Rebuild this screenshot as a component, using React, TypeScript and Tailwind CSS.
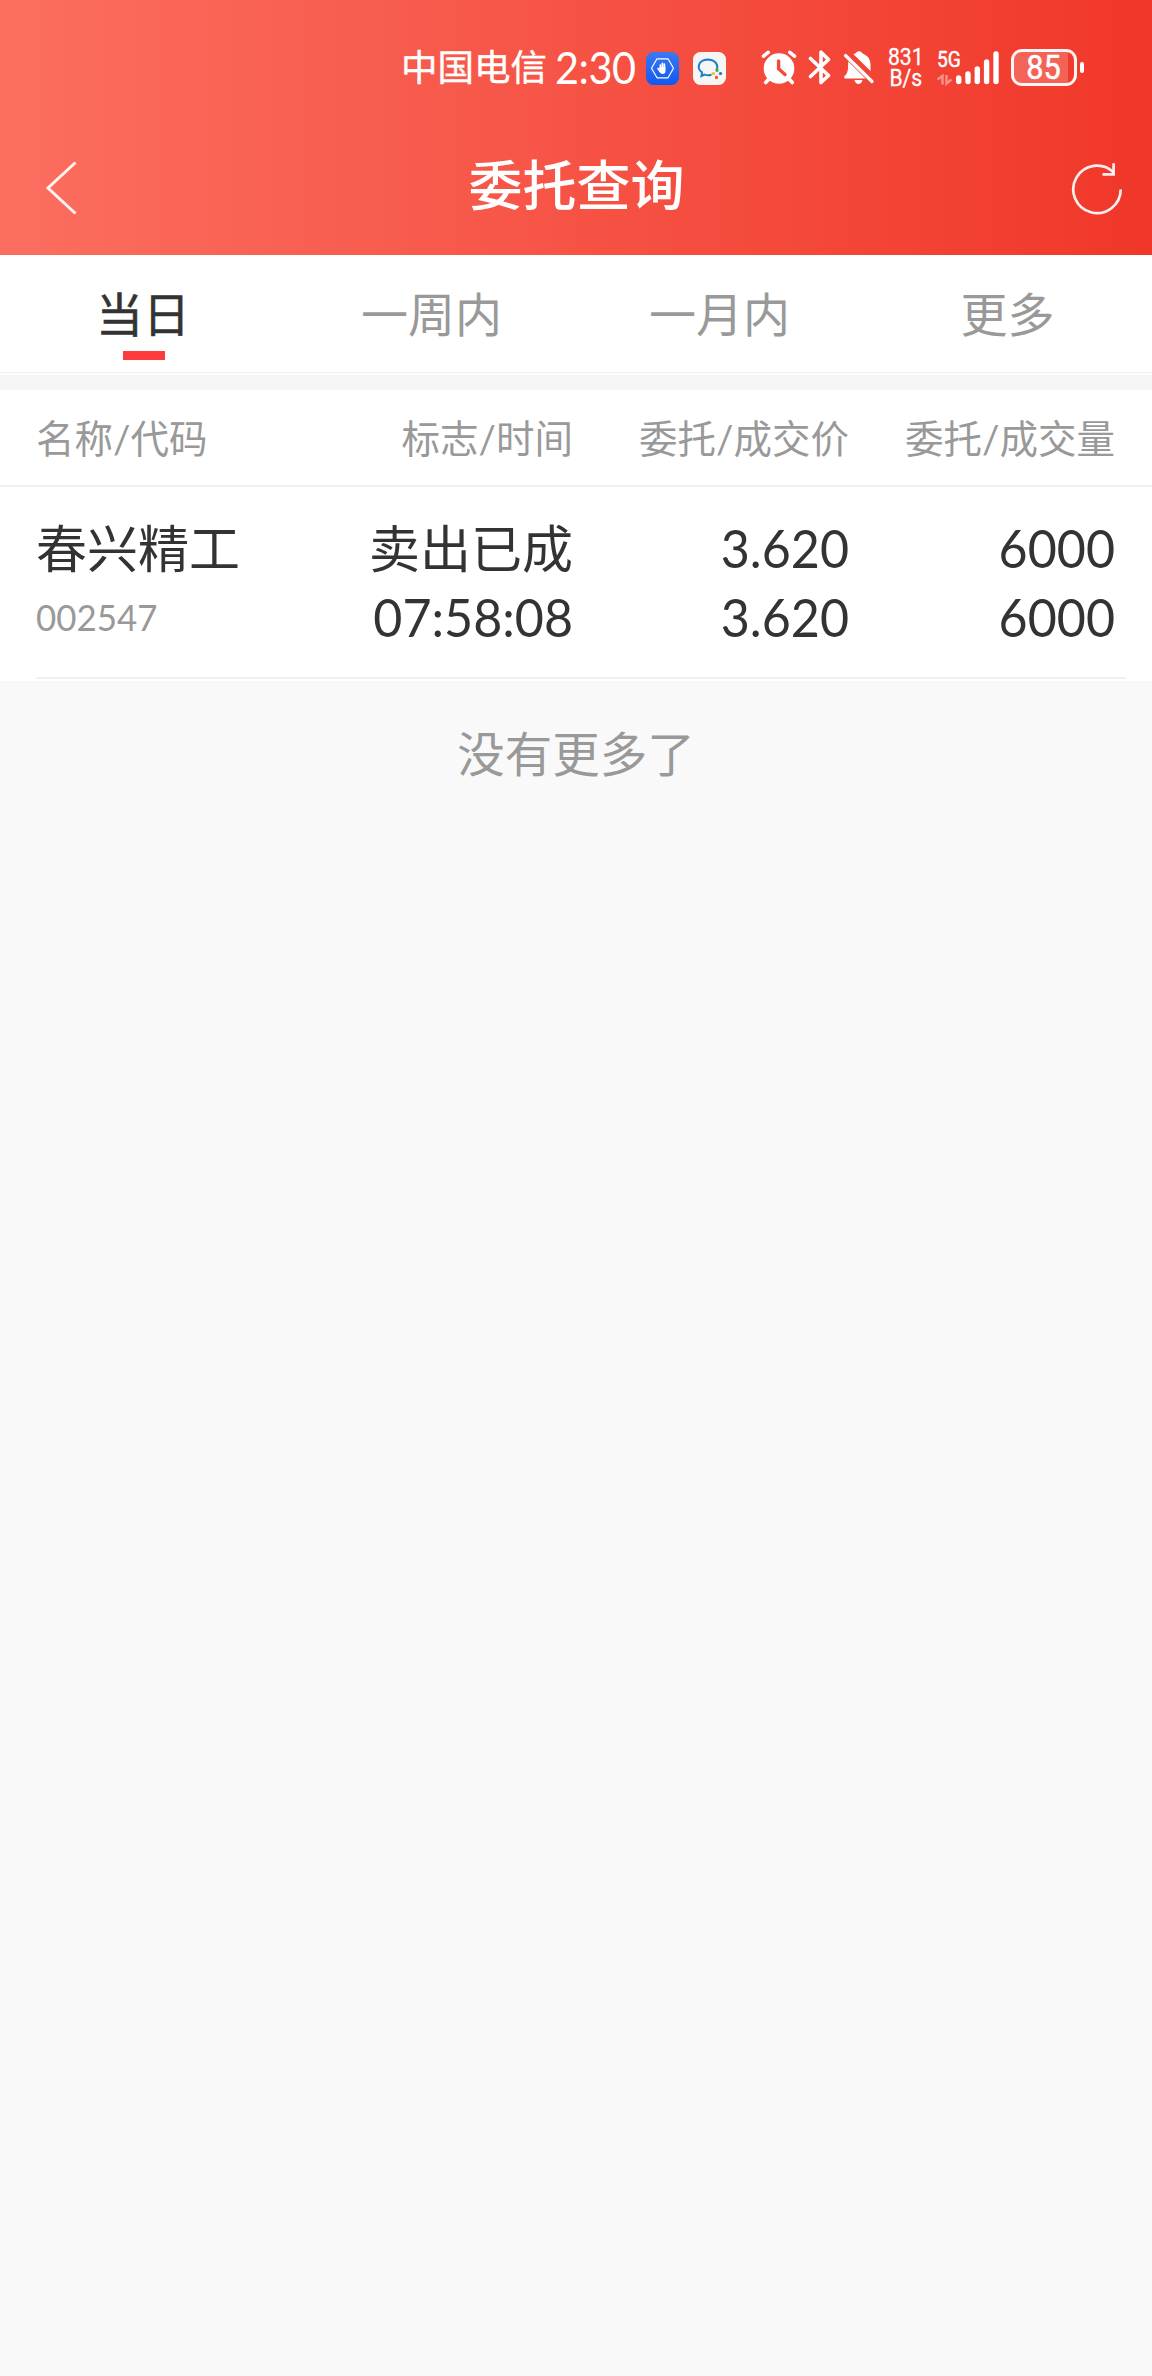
import React from "react";

const cjk = "font-['Lato','Noto_Sans_CJK_SC',sans-serif]";

function ShieldAppIcon() {
  return (
    <svg className="mt-[52px] size-[33px]" viewBox="0 0 33 33">
      <defs>
        <linearGradient id="blue" x1="0" y1="0" x2="0" y2="1">
          <stop offset="0" stopColor="#3d78f0" />
          <stop offset="1" stopColor="#0f59f2" />
        </linearGradient>
      </defs>
      <rect width="33" height="33" rx="7.5" fill="url(#blue)" />
      <path d="M5.5 16.3 11 6.8h11l5.5 9.5L22 25.800H11z" fill="none" stroke="#fff" strokeWidth="1.2" strokeLinejoin="round" />
      <g stroke="#fff" strokeWidth="1.7" strokeLinecap="round" fill="none">
        <path d="M14.4 17v-4M16.4 16v-4.7M18.4 16.5v-4.300M12 16.600l2.400 3.200" />
      </g>
      <path d="M13.5 15h6v4q0 3-3 3-2 0-3-2.500z" fill="#fff" />
    </svg>
  );
}

function ChatAppIcon() {
  return (
    <svg className="ml-[14px] mt-[52px] size-[33px]" viewBox="0 0 33 33">
      <rect width="33" height="33" rx="7.5" fill="#f6f5f6" />
      <path d="M18.500 22.800c-2.500.700-5 .600-7-.200L8.500 24l.500-3.600C3.500 16.500 5 7.800 14.500 7.400c7.500 0 10.800 5 9.500 9.600" fill="none" stroke="#1d7ecb" strokeWidth="2" />
      <g strokeWidth="3" strokeLinecap="round">
        <path d="M24 17.600v.8" stroke="#3fae49" />
        <path d="M27.300 21.400h.4" stroke="#1d7ecb" />
        <path d="M23.500 25v.7" stroke="#e8622c" />
        <path d="M20 21.500h.6" stroke="#f2c230" />
      </g>
    </svg>
  );
}

function AlarmIcon() {
  return (
    <svg className="ml-[35px] mt-[50px] h-[35px] w-[36px]" viewBox="0 0 36 35">
      <g stroke="#fff" strokeWidth="3.600" strokeLinecap="round">
        <path d="M2.500 6.200 7.200 2.400M33.500 6.200 28.800 2.400M8 29l-3.300 3.500M28 29l3.300 3.500" />
      </g>
      <circle cx="18" cy="18.500" r="15.300" fill="#fff" />
      <path d="M17.600 11v7.800l6.400 5.700" fill="none" stroke="#f4493c" strokeWidth="3.400" strokeLinecap="round" />
    </svg>
  );
}

function BluetoothIcon() {
  return (
    <svg className="ml-[11px] mt-[50px] h-[35px] w-[24px]" viewBox="0 0 24 35">
      <path d="M2.500 8.500 20.500 25.500 13 32.500V20.500M2.500 26.500 20.500 9.500 13 2.200V14.500" fill="none" stroke="#fff" strokeWidth="3.600" strokeLinecap="round" strokeLinejoin="round" />
    </svg>
  );
}

function MutedBellIcon() {
  return (
    <svg className="ml-[11px] mt-[50px] h-[35px] w-[32px]" viewBox="0 0 32 35">
      <path d="M10.500 4.200Q13 3.400 13.500 2.200q2.500-2 5 0 .500 1.200 2.500 2Q27.500 7 27.500 14.500V21zM5.300 11.500 22.500 28.500H2.500q-2-.500-1-2.500Q5 23 5 18zM11.500 30h8q-1 4-4 4T11.500 30z" fill="#fff" />
      <path d="M2.500 5.500 29 31.500" stroke="#fff" strokeWidth="3.200" strokeLinecap="round" />
    </svg>
  );
}

function SignalIcon() {
  return (
    <svg className="h-[36px] w-[64px]" viewBox="0 0 64 36">
      <g fill="none" stroke="#fff" strokeOpacity=".4" strokeWidth="2.600">
        <path d="M.500 29.500 5.500 26V34.500M9.500 25v8.500L14.500 29.500" />
      </g>
      <g stroke="#fff" strokeWidth="5.400" strokeLinecap="round">
        <path d="M21.700 27.900v3.600M31 23.900v7.600M40.300 18.900v12.600M49.600 11.900v19.600M59 3.900v27.600" />
      </g>
    </svg>
  );
}

function StatusBar() {
  return (
    <div className="flex h-[120px] items-start pl-[401px] text-white">
      <span className="mt-[41px] text-[36.500px] leading-[52px] whitespace-nowrap [-webkit-text-stroke:0.400px_#fff]">中国电信</span>
      <span className="ml-[8px] mt-[41px] w-[91px] origin-left scale-x-[0.940] text-[44px] leading-[52px] tracking-[-0.500px] whitespace-nowrap">2:30</span>
      <ShieldAppIcon />
      <ChatAppIcon />
      <AlarmIcon />
      <BluetoothIcon />
      <MutedBellIcon />
      <div className="ml-[12px] mt-[47px] flex w-[38px] justify-center text-center font-[Roboto] text-[23.500px] leading-[21px]">
        <p className="scale-x-[0.900] [-webkit-text-stroke:0.300px_#fff]">
          831
          <br />
          B/s
        </p>
      </div>
      <div className="relative ml-[12px] mt-[50px]">
        <SignalIcon />
        <span className="absolute left-0 top-[-1px] origin-left scale-x-[0.850] font-[Roboto] text-[22.500px] leading-[20px] [-webkit-text-stroke:0.500px_#fff]">5G</span>
      </div>
      <div className="ml-[10px] mt-[49px] flex h-[37px] items-center">
        <div className="relative flex h-[37px] w-[66px] items-center justify-center overflow-hidden rounded-[11px] border-[3px] border-white/95">
          <div className="absolute inset-y-0 left-0 w-[54px] bg-white/20" />
          <span className="relative scale-x-[0.930] font-[Roboto] text-[33px] leading-[31px] [-webkit-text-stroke:0.500px_#fff]">85</span>
        </div>
        <div className="ml-[3px] h-[11px] w-[4px] rounded-[2px] bg-white" />
      </div>
    </div>
  );
}

function TitleBar() {
  return (
    <div className="flex h-[135px] items-start justify-between text-white">
      <svg className="ml-[44px] mt-[40px] h-[56px] w-[36px]" viewBox="0 0 36 56">
        <path d="M31.500 2.500 4 28l27.500 25.500" fill="none" stroke="#fff" strokeOpacity=".92" strokeWidth="3" />
      </svg>
      <h1 className="ml-[3px] mt-[27px] text-[54px] font-medium leading-[78px] whitespace-nowrap">委托查询</h1>
      <svg className="mr-[28px] mt-[42px] size-[54px]" viewBox="0 0 54 54">
        <path d="M50.700 27.500A23.700 23.700 0 1 1 43.600 10.500" fill="none" stroke="#fff" strokeOpacity=".92" strokeWidth="2.700" />
        <path d="M43.600 1.300v11H32.500" fill="none" stroke="#fff" strokeOpacity=".92" strokeWidth="2.700" />
      </svg>
    </div>
  );
}

const tabs = ["当日", "一周内", "一月内", "更多"];

function Tabs() {
  return (
    <nav className="grid h-[118px] grid-cols-4 border-b border-[#eeeeee] bg-white text-[47px]">
      {tabs.map((tab, i) => (
        <button
          key={tab}
          className={
            i === 0
              ? "flex flex-col items-center text-[#333333] [-webkit-text-stroke:0.500px_#333333]"
              : "flex flex-col items-center text-[#999999]"
          }
        >
          <span className={i === 0 ? "mt-[24px] mr-[2px] leading-[70px]" : "mt-[24px] mr-[1px] leading-[70px]"}>{tab}</span>
          {i === 0 && <span className="mt-[2px] h-[9px] w-[42px] bg-[#ff3b3b]" />}
        </button>
      ))}
    </nav>
  );
}

const columns = "grid grid-cols-[300px_237px_276px_266px] content-start pl-[36px] whitespace-nowrap text-right";
const figure = "origin-right scale-x-[0.965] text-[52px]";

function OrdersTable() {
  return (
    <section className="bg-white">
      <div className={`${columns} h-[97px] border-b-2 border-[#f0f0f0] pt-[20px] text-[38.500px] leading-[56px] text-[#999999]`}>
        <span className="text-left">名称/代码</span>
        <span>标志/时间</span>
        <span>委托/成交价</span>
        <span>委托/成交量</span>
      </div>
      <div className={`${columns} h-[190px] pt-[27px] text-[51px] leading-[69px] text-[#333333]`}>
        <span className="text-left">春兴精工</span>
        <span>卖出已成</span>
        <span className={figure}>3.620</span>
        <span className={figure}>6000</span>
        <span className="origin-left scale-x-[0.970] text-left text-[36px] text-[#999999]">002547</span>
        <span className={figure}>07:58:08</span>
        <span className={figure}>3.620</span>
        <span className={figure}>6000</span>
      </div>
      <div className="ml-[36px] mr-[26px] h-[2px] bg-[#f0f0f0]" />
      <div className="h-[2px]" />
    </section>
  );
}

export default function App() {
  return (
    <main className={`${cjk} min-h-[2376px] w-[1152px] bg-[#f9f9f9]`}>
      <header className="bg-[linear-gradient(90deg,#fb6d5e_3%,#f65345_50%,#f03729_100%)]">
        <StatusBar />
        <TitleBar />
      </header>
      <Tabs />
      <div className="h-[2px] bg-white" />
      <div className="h-[15px] bg-[#f5f5f5]" />
      <OrdersTable />
      <p className="pt-[38px] text-center text-[47.500px] leading-[70px] text-[#999999]">没有更多了</p>
    </main>
  );
}
